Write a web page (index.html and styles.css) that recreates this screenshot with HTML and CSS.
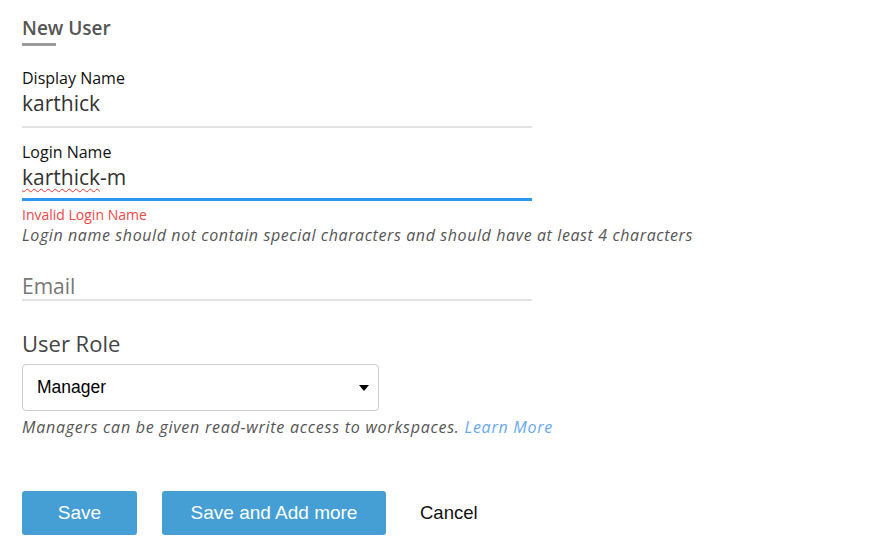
FILE: index.html
```html
<!DOCTYPE html>
<html>
<head>
<meta charset="utf-8">
<link rel="stylesheet" href="styles.css">
</head>
<body>
<div class="page">
  <div class="title-wrap">
    <h1 class="title">New User</h1>
    <div class="title-bar"></div>
  </div>

  <div class="field">
    <div class="label">Display Name</div>
    <div class="value">karthick</div>
  </div>

  <div class="field field-focus">
    <div class="label">Login Name</div>
    <div class="value"><span class="spell">karthick</span>-m</div>
  </div>
  <div class="error">Invalid Login Name</div>
  <div class="hint">Login name should not contain special characters and should have at least 4 characters</div>

  <div class="field field-email">
    <div class="value placeholder">Email</div>
  </div>

  <div class="role-label">User Role</div>
  <div class="select">
    <span class="select-text">Manager</span>
    <svg class="caret" width="10" height="6" viewBox="0 0 10 6"><path d="M0 0H10L5 6Z" fill="#000"/></svg>
  </div>
  <div class="hint hint-role">Managers can be given read-write access to workspaces. <span class="link">Learn More</span></div>

  <div class="actions">
    <button class="btn btn-save">Save</button>
    <button class="btn btn-more">Save and Add more</button>
    <span class="cancel">Cancel</span>
  </div>
</div>
</body>
</html>
```
FILE: styles.css
```css
html, body {
  margin: 0;
  padding: 0;
  background: #fff;
}
.page {
  padding: 16px 0 0 22px;
  font-family: "Open Sans", "Liberation Sans", sans-serif;
  width: 510px;
}
.title-wrap {
  display: flex;
  flex-direction: column;
}
.title {
  margin: 0;
  font-size: 19px;
  font-weight: 600;
  color: #555;
  line-height: 24px;
}
.title-bar {
  width: 34px;
  height: 3px;
  background: #9b9b9b;
  margin-top: 3px;
}
.field {
  border-bottom: 2px solid #e2e2e2;
  padding-bottom: 8px;
}
.title-wrap + .field { margin-top: 22px; }
.label {
  font-size: 16px;
  color: #111;
  line-height: 20px;
}
.value {
  font-size: 21px;
  color: #333;
  line-height: 30px;
}
.field + .field { margin-top: 14px; }
.field-focus {
  border-bottom: 3px solid #2b97ee;
  padding-bottom: 6px;
}
.spell {
  text-decoration: underline wavy #e53935;
  text-decoration-thickness: 1px;
  text-underline-offset: 3px;
}
.error {
  margin-top: 4px;
  font-size: 14px;
  color: #f04848;
  line-height: 19px;
}
.hint {
  font-size: 16px;
  font-style: italic;
  color: #555;
  line-height: 22px;
  letter-spacing: 0.6px;
  white-space: nowrap;
}
.hint-role { letter-spacing: 0.75px; }
.link { color: #69a8ea; }
.field-email {
  margin-top: 27px;
  padding-bottom: 0;
}
.field-email .value { line-height: 26px; }
.placeholder { color: #777; }
.role-label {
  margin-top: 28px;
  font-size: 22px;
  color: #444;
  line-height: 28px;
}
.select {
  margin-top: 7px;
  width: 357px;
  height: 47px;
  border: 1px solid #ccc;
  border-radius: 4px;
  display: flex;
  align-items: center;
  justify-content: space-between;
  padding: 0 9px 0 14px;
  box-sizing: border-box;
}
.select-text {
  font-family: "Liberation Sans", Arial, sans-serif;
  font-size: 17.5px;
  color: #000;
}
.select + .hint { margin-top: 5px; }
.actions {
  margin-top: 53px;
  display: flex;
  align-items: center;
}
.btn {
  height: 44px;
  border: none;
  border-radius: 3px;
  background: #459fd4;
  color: #fff;
  font-family: "Liberation Sans", Arial, sans-serif;
  font-size: 19px;
  padding: 0;
}
.btn-save { width: 115px; }
.btn-more { width: 224px; margin-left: 25px; }
.cancel {
  margin-left: 34px;
  font-family: "Liberation Sans", Arial, sans-serif;
  font-size: 18.5px;
  color: #111;
}
```
